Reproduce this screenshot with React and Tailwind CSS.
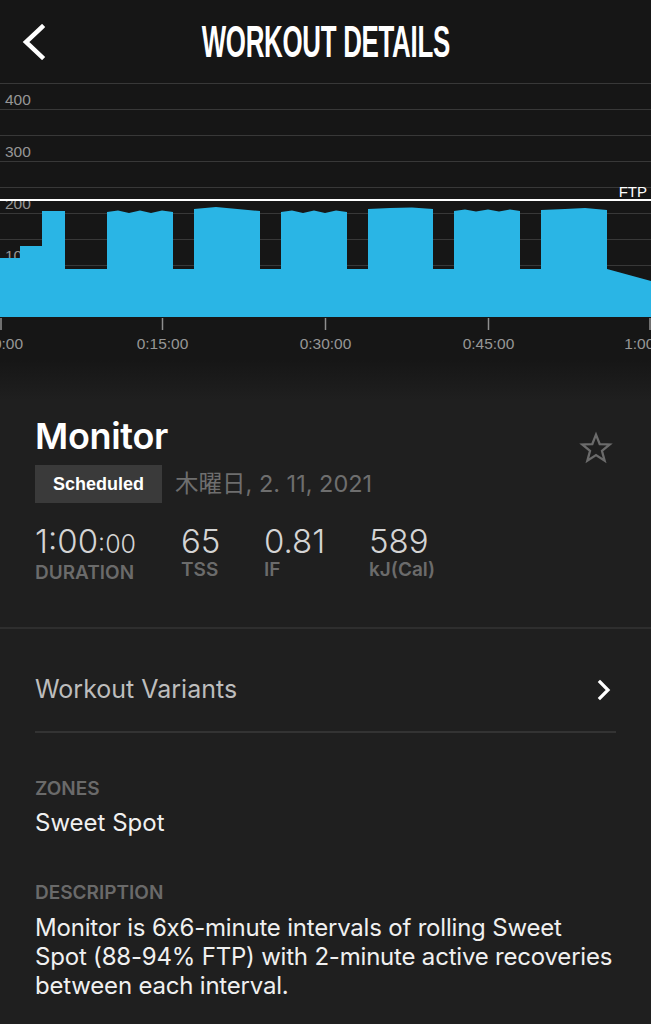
import React from "react";

const BLUE = "#2ab5e5";

function Chart() {
  const grid = [83.5, 109.5, 135.5, 161.5, 187.5, 213.5, 239.5, 265.5, 291.5];
  const yLabels = [
    { t: "400", y: 105 },
    { t: "300", y: 157 },
    { t: "200", y: 209 },
    { t: "100", y: 261 },
  ];
  const ticks = [
    { x: 1, lx: 8, t: "0:00" },
    { x: 162.5, lx: 162.5, t: "0:15:00" },
    { x: 325.5, lx: 325.5, t: "0:30:00" },
    { x: 488.5, lx: 488.5, t: "0:45:00" },
    { x: 650, lx: 650, t: "1:00:00" },
  ];
  const wavy = (x0) =>
    `L${x0},212 L${x0 + 11},210.5 L${x0 + 22},213 L${x0 + 33},210.5 L${x0 + 44},213 L${x0 + 55},210.5 L${x0 + 66},212 `;
  const d =
    "M0,317 L0,258 L20,258 L20,246 L42,246 L42,211 L65,211 L65,269 L107,269 " +
    wavy(107) +
    "L173,269 L194,269 L194,209 L216,207 L260,211 L260,269 L281,269 " +
    wavy(281) +
    "L347,269 L368,269 L368,209 L390,208 L412,207.5 L433,209 L433,269 L454,269 " +
    "L454,211 L465,209.5 L476,211.5 L488,209.5 L499,211.5 L510,209.5 L520,211 " +
    "L520,269 L541,269 L541,210 L565,209 L585,208 L607,210 L607,269 L651,281 L651,317 Z";
  return (
    <svg
      width="651"
      height="277"
      viewBox="0 83 651 277"
      className="block"
      style={{ fontFamily: "'Liberation Sans', Arial, sans-serif" }}
    >
      <rect x="0" y="83" width="651" height="277" fill="#161616" />
      {grid.map((y) => (
        <line key={y} x1="0" x2="651" y1={y} y2={y} stroke="#383838" strokeWidth="1" />
      ))}
      {yLabels.map((l) => (
        <text key={l.t} x="5" y={l.y} fontSize="15.5" fill="#969696">
          {l.t}
        </text>
      ))}
      <path d={d} fill={BLUE} />
      <line x1="0" x2="651" y1="200" y2="200" stroke="#ffffff" strokeWidth="2" />
      <text x="647" y="197" fontSize="15" fill="#ffffff" textAnchor="end">
        FTP
      </text>
      {ticks.map((t) => (
        <g key={t.t}>
          <line x1={t.x} x2={t.x} y1="318" y2="330" stroke="#8f8f8f" strokeWidth="1.5" />
          <text x={t.lx} y="349" fontSize="15.5" fill="#969696" textAnchor="middle">
            {t.t}
          </text>
        </g>
      ))}
    </svg>
  );
}

function Stat({ value, small, label, w }) {
  return (
    <div className={`flex flex-col ${w}`}>
      <div className="text-[33px] leading-[38px] font-light text-[#d4d4d4]">
        {value}
        {small && <span className="text-[25px]">{small}</span>}
      </div>
      <div className="text-[19px] leading-[20px] font-semibold text-[#6b6b6b]">
        {label}
      </div>
    </div>
  );
}

export default function App() {
  return (
    <div
      className="w-[651px] h-[1024px] overflow-hidden bg-[#1f1f1f]"
      style={{ fontFamily: "Inter, 'Noto Sans CJK JP', sans-serif" }}
    >
      <header className="h-[83px] bg-[#161616] grid grid-cols-[1fr_auto_1fr] items-center">
        <div className="pl-[20px] flex items-center">
          <svg width="26" height="36" viewBox="0 0 26 36">
            <path d="M22 3 L6 18 L22 33" fill="none" stroke="#fff" strokeWidth="4.5" strokeLinecap="square" />
          </svg>
        </div>
        <div className="w-[246px] flex justify-center overflow-visible">
          <span
            className="inline-block whitespace-nowrap text-white font-bold text-[45px] leading-none scale-x-[0.575] tracking-[-0.5px]"
            style={{ fontFamily: "'Liberation Sans', Arial, sans-serif" }}
          >
            WORKOUT DETAILS
          </span>
        </div>
        <div />
      </header>

      <Chart />
      <div className="h-[40px] bg-gradient-to-b from-[#161616] to-[#1f1f1f]" />

      <section className="relative px-[35px] pt-[14px] pb-[44px]">
        <h1 className="text-[36px] leading-[44px] font-semibold text-white tracking-[-0.3px]">
          Monitor
        </h1>
        <svg
          className="absolute right-[38px] top-[31px]"
          width="34"
          height="34"
          viewBox="0 0 24 24"
        >
          <path
            d="M12 2.5 L14.6 9.2 L21.7 9.5 L16.2 14 L18.1 21 L12 17 L5.9 21 L7.8 14 L2.3 9.5 L9.4 9.2 Z"
            fill="none"
            stroke="#6b6b6b"
            strokeWidth="1.6"
            strokeLinejoin="miter"
          />
        </svg>
        <div className="flex items-center mt-[7px]">
          <div
            className="w-[127px] h-[38px] bg-[#3a3a3a] flex items-center justify-center text-white text-[18px] font-bold"
            style={{ fontFamily: "'Liberation Sans', Arial, sans-serif" }}
          >
            Scheduled
          </div>
          <div className="ml-[13px] text-[23.5px] text-[#6e6e6e]">木曜日, 2. 11, 2021</div>
        </div>
        <div className="flex mt-[19px]">
          <Stat value="1:00" small=":00" label="DURATION" w="w-[146px]" />
          <Stat value="65" label="TSS" w="w-[83px]" />
          <Stat value="0.81" label="IF" w="w-[105px]" />
          <Stat value="589" label="kJ(Cal)" w="" />
        </div>
      </section>

      <div className="border-t-2 border-[#2e2e2e]" />

      <div className="px-[35px]">
        <div className="h-[104px] pt-[20px] flex items-center justify-between border-b-2 border-[#333333]">
          <span className="text-[25px] text-[#bdbdbd]">Workout Variants</span>
          <svg width="16" height="22" viewBox="0 0 16 22" className="mr-[4px]">
            <path d="M4 3 L12 11 L4 19" fill="none" stroke="#fff" strokeWidth="3.2" strokeLinecap="square" />
          </svg>
        </div>
        <div className="pt-[45px]">
          <div className="text-[19px] font-semibold text-[#6a6a6a] leading-[22px]">ZONES</div>
          <div className="text-[24px] text-[#f0f0f0] mt-[9px] leading-[28px]">Sweet Spot</div>
        </div>
        <div className="pt-[45px]">
          <div className="text-[19px] font-semibold text-[#6a6a6a] leading-[22px]">DESCRIPTION</div>
          <p className="text-[24px] text-[#f0f0f0] mt-[9px] leading-[29px] tracking-[-0.2px]">
            Monitor is 6x6-minute intervals of rolling Sweet
            <br />
            Spot (88-94% FTP) with 2-minute active recoveries
            <br />
            between each interval.
          </p>
        </div>
      </div>
    </div>
  );
}
